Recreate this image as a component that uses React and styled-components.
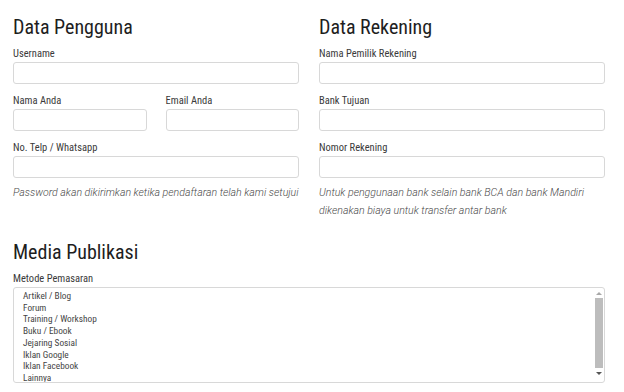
import styled, { createGlobalStyle } from 'styled-components'

const GlobalStyle = createGlobalStyle`
  body {
    margin: 0;
    background: #fff;
    font-family: Roboto, "Liberation Sans", sans-serif;
  }
`

const Page = styled.div`
  width: 624px;
  box-sizing: border-box;
  padding: 15px 19px 0 13px;
`

const Columns = styled.div`
  display: grid;
  grid-template-columns: 1fr 1fr;
  column-gap: 20px;
`

const Column = styled.div`
  display: flex;
  flex-direction: column;
`

const Heading = styled.h2`
  margin: 0 0 9px;
  font-size: 20px;
  line-height: 24px;
  font-weight: 430;
  font-stretch: 86%;
  color: #1e1e1e;
`

const Stack = styled.div`
  display: flex;
  flex-direction: column;
  gap: 11px;
`

const Pair = styled.div`
  display: grid;
  grid-template-columns: 1fr 1fr;
  column-gap: 19px;
`

const Field = styled.div`
  display: flex;
  flex-direction: column;
  gap: 2px;
`

const Label = styled.label`
  font-size: 10.5px;
  line-height: 12px;
  font-stretch: 87.5%;
  color: #3a3a3a;
`

const Input = styled.input`
  box-sizing: border-box;
  width: 100%;
  height: 22px;
  margin: 0;
  border: 1px solid #d8d8d8;
  border-radius: 3px;
  background: #fff;
`

const Note = styled.p`
  margin: 6px 0 0;
  font-size: 10.6px;
  line-height: 18px;
  font-style: italic;
  font-weight: 300;
  color: #4a4a4a;
`

const Section = styled.div`
  margin-top: 20px;
  display: flex;
  flex-direction: column;
`

const ListBox = styled.div`
  margin-top: 2px;
  display: flex;
  height: 96px;
  box-sizing: border-box;
  border: 1px solid #d8d8d8;
  border-radius: 3px;
  overflow: hidden;
`

const Options = styled.ul`
  flex: 1;
  margin: 0;
  padding: 2px 0 0 9px;
  list-style: none;
`

const Option = styled.li`
  font-size: 9.3px;
  line-height: 11.7px;
  font-stretch: 87.5%;
  color: #444;
`

const Scrollbar = styled.div`
  width: 10px;
  display: flex;
  flex-direction: column;
  align-items: center;
`

const Arrow = styled.div`
  height: 10px;
  display: flex;
  align-items: center;
  justify-content: center;
  &::before {
    content: '';
    border-left: 3px solid transparent;
    border-right: 3px solid transparent;
    ${p => p.$down
      ? 'border-top: 3px solid #555;'
      : 'border-bottom: 3px solid #a8a8a8;'}
  }
`

const Thumb = styled.div`
  width: 8px;
  height: 70px;
  background: #bdbdbd;
`

const methods = [
  'Artikel / Blog',
  'Forum',
  'Training / Workshop',
  'Buku / Ebook',
  'Jejaring Sosial',
  'Iklan Google',
  'Iklan Facebook',
  'Lainnya',
]

const App = () => (
  <Page>
    <GlobalStyle />
    <Columns>
      <Column>
        <Heading>Data Pengguna</Heading>
        <Stack>
          <Field>
            <Label>Username</Label>
            <Input />
          </Field>
          <Pair>
            <Field>
              <Label>Nama Anda</Label>
              <Input />
            </Field>
            <Field>
              <Label>Email Anda</Label>
              <Input />
            </Field>
          </Pair>
          <Field>
            <Label>No. Telp / Whatsapp</Label>
            <Input />
          </Field>
        </Stack>
        <Note>Password akan dikirimkan ketika pendaftaran telah kami setujui</Note>
      </Column>
      <Column>
        <Heading>Data Rekening</Heading>
        <Stack>
          <Field>
            <Label>Nama Pemilik Rekening</Label>
            <Input />
          </Field>
          <Field>
            <Label>Bank Tujuan</Label>
            <Input />
          </Field>
          <Field>
            <Label>Nomor Rekening</Label>
            <Input />
          </Field>
        </Stack>
        <Note>Untuk penggunaan bank selain bank BCA dan bank Mandiri dikenakan biaya untuk transfer antar bank</Note>
      </Column>
    </Columns>
    <Section>
      <Heading>Media Publikasi</Heading>
      <Label>Metode Pemasaran</Label>
      <ListBox>
        <Options>
          {methods.map(m => <Option key={m}>{m}</Option>)}
        </Options>
        <Scrollbar>
          <Arrow />
          <Thumb />
          <Arrow $down />
        </Scrollbar>
      </ListBox>
    </Section>
  </Page>
)

export default App
